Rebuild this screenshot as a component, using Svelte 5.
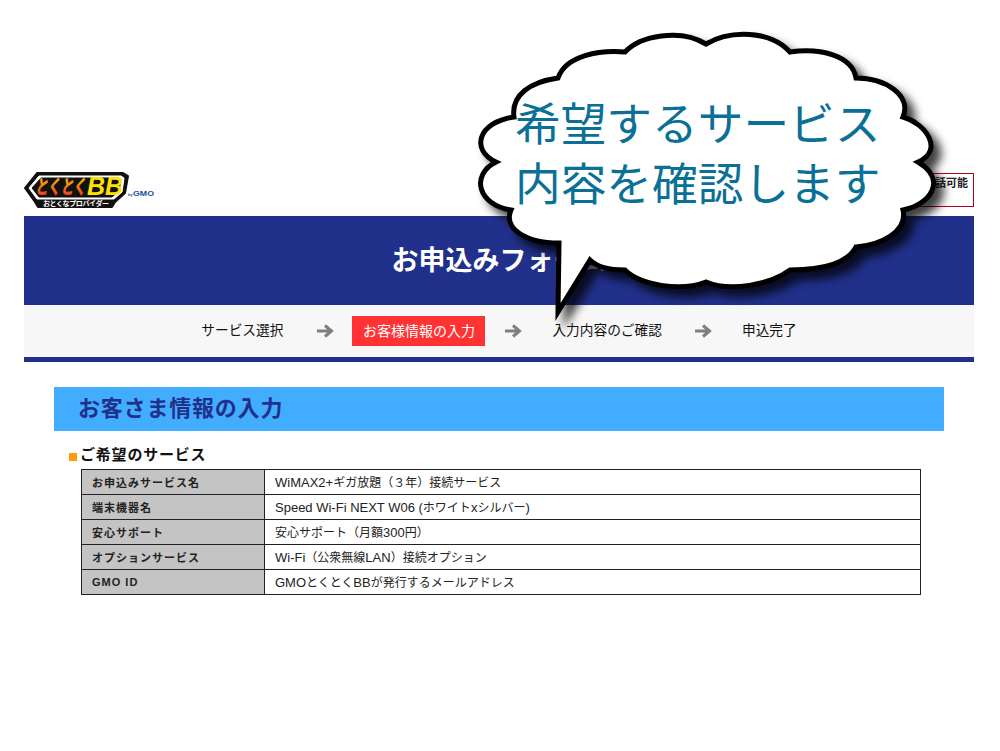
<script>
  const steps = [
    { label: 'サービス選択' },
    { label: 'お客様情報の入力', active: true },
    { label: '入力内容のご確認' },
    { label: '申込完了' }
  ];
  const rows = [
    ['お申込みサービス名', 'WiMAX2+ギガ放題（３年）接続サービス'],
    ['端末機器名', 'Speed Wi-Fi NEXT W06 (ホワイトxシルバー)'],
    ['安心サポート', '安心サポート（月額300円）'],
    ['オプションサービス', 'Wi-Fi（公衆無線LAN）接続オプション'],
    ['GMO ID', 'GMOとくとくBBが発行するメールアドレス']
  ];

  // latin runs are set a little larger than the japanese text
  const splitLatin = (text) => text.split(/([A-Za-z0-9+\-() ]+)/).filter(Boolean);
  const isLatin = (part) => /^[A-Za-z0-9+\-() ]+$/.test(part);
</script>

<div class="page">
  <header class="top">
    <svg class="logo" viewBox="0 0 132 38" width="132" height="38">
      <defs>
        <linearGradient id="kana" x1="0" y1="0" x2="0" y2="1">
          <stop offset="0" stop-color="#ffd800" />
          <stop offset="0.55" stop-color="#f77a10" />
          <stop offset="1" stop-color="#e01a1a" />
        </linearGradient>
      </defs>
      <path class="logo-back" d="M1 18 L13 3 H99 L104 6 L101 23 L91 32 L88 37 H14 L11 32 Z" />
      <path class="logo-band" d="M5 18 L15 6 H97 L100 8 L98 22 L90 29 H13 Z" />
      <path class="logo-inner" d="M8 18 L17 8 H95 L97 10 L95 21 L88 27 H15 Z" />
      <text class="logo-kana" x="11" y="24" textLength="51" lengthAdjust="spacingAndGlyphs" fill="url(#kana)">とくとく</text>
      <text class="logo-bb" x="63" y="25" textLength="36" lengthAdjust="spacingAndGlyphs">BB</text>
      <text class="logo-sub" x="19" y="36" textLength="66">おとくなプロバイダー</text>
      <text class="logo-by" x="104" y="26">by</text>
      <text class="logo-gmo" x="109" y="26" textLength="21" lengthAdjust="spacingAndGlyphs">GMO</text>
    </svg>
    <div class="tel">24時間通話可能</div>
  </header>

  <div class="banner">お申込みフォーム</div>

  <nav class="steps">
    {#each steps as step, i}
      {#if i > 0}
        <svg class="arrow" viewBox="0 0 18 14" width="18" height="14">
          <path d="M1 7 H15 M9 1.5 L15.5 7 L9 12.5" fill="none" stroke="#7f7f7f" stroke-width="3" />
        </svg>
      {/if}
      <span class="step" class:active={step.active}>{step.label}</span>
    {/each}
  </nav>

  <main class="content">
    <h2 class="section">お客さま情報の入力</h2>
    <h3 class="sub"><span class="mark"></span>ご希望のサービス</h3>
    <table>
      <tbody>
        {#each rows as row}
          <tr>
            <th>{row[0]}</th>
            <td>
              {#each splitLatin(row[1]) as part}
                {#if isLatin(part)}<span class="lat">{part}</span>{:else}{part}{/if}
              {/each}
            </td>
          </tr>
        {/each}
      </tbody>
    </table>
  </main>

  <!-- speech bubble lies over the page -->
  <div class="bubble">
    <svg viewBox="0 0 1000 751" width="1000" height="751">
      <path class="cloud" d="M625 52 C640 36 680 28 706 44 C730 30 770 30 790 52 C820 48 852 55 856 78 C885 78 912 95 903 117 C925 123 945 150 918 162 C948 180 930 205 903 210 C908 232 880 245 856 247 C845 268 810 270 790 270 C770 285 730 292 706 282 C680 292 640 285 625 270 C610 270 598 268 590 260 L558 312 L559 243 C525 243 503 228 511 210 C478 205 470 175 496 162 C470 150 478 122 514 117 C511 95 530 82 558 78 C566 55 600 50 625 52 Z" />
    </svg>
    <p class="bubble-text">希望するサービス<br />内容を確認します</p>
  </div>
</div>

<style>
  :global(body) {
    margin: 0;
    background: #fff;
  }
  .page {
    position: relative;
    width: 1000px;
    height: 751px;
    overflow: hidden;
    padding: 170px 26px 0 24px;
    box-sizing: border-box;
    font-family: "Liberation Sans", "Noto Sans CJK JP", sans-serif;
    color: #111;
  }
  .top {
    display: flex;
    justify-content: space-between;
    align-items: flex-start;
    height: 38px;
    margin-bottom: 8px;
  }
  .logo {
    display: block;
  }
  .logo-back {
    fill: #111;
    stroke: #111;
    stroke-width: 2;
    stroke-linejoin: round;
  }
  .logo-band {
    fill: #fff;
    stroke: #fff;
    stroke-linejoin: round;
  }
  .logo-inner {
    fill: #111;
    stroke: #111;
    stroke-linejoin: round;
  }
  .logo-kana {
    font: italic 900 20px "Noto Sans CJK JP", sans-serif;
  }
  .logo-bb {
    font: italic 700 25px "Liberation Sans", sans-serif;
    fill: #ffe100;
  }
  .logo-sub {
    font: 700 7px "Noto Sans CJK JP", sans-serif;
    fill: #fff;
  }
  .logo-by {
    font: 700 4px "Liberation Sans", sans-serif;
    fill: #1a4f9c;
  }
  .logo-gmo {
    font: 700 8px "Liberation Sans", sans-serif;
    fill: #1a4f9c;
  }
  .tel {
    width: 130px;
    height: 32px;
    margin-top: 3px;
    border: 1px solid #b00020;
    text-align: right;
    padding-right: 5px;
    font-size: 11px;
    font-weight: 700;
    line-height: 19px;
    color: #222;
  }
  .banner {
    background: #21308a;
    color: #fff;
    height: 89px;
    line-height: 86px;
    text-align: center;
    font-size: 27px;
    font-weight: 700;
    font-family: "Noto Sans CJK JP", sans-serif;
  }
  .steps {
    display: flex;
    justify-content: center;
    align-items: center;
    gap: 20px;
    height: 52px;
    background: #f7f7f7;
    border-bottom: 5px solid #21308a;
  }
  .step {
    font-size: 13.7px;
    padding: 0 10px;
    line-height: 30px;
  }
  .step:nth-of-type(1) {
    padding-right: 13px;
  }
  .step:nth-of-type(3) {
    padding-right: 12px;
  }
  .step.active {
    background: #ff3333;
    color: #fff;
    font-size: 14px;
    padding: 0 10.5px;
    margin: 0 -1px 0 -2px;
  }
  .content {
    padding: 25px 30px 0;
  }
  .section {
    margin: 0;
    height: 44px;
    line-height: 44px;
    padding-left: 24px;
    background: #42adff;
    color: #21308a;
    font-size: 22px;
    font-weight: 700;
    letter-spacing: 0.8px;
  }
  .sub {
    display: flex;
    align-items: center;
    margin: 13px 0 0 15px;
    height: 18px;
    font-size: 15px;
    font-weight: 700;
    letter-spacing: 0.8px;
  }
  .mark {
    width: 8px;
    height: 8px;
    background: #ff9a0a;
    margin-right: 3px;
    margin-top: 8px;
  }
  table {
    width: 840px;
    margin: 7px 0 0 27px;
    border-collapse: collapse;
    table-layout: fixed;
  }
  th, td {
    border: 1px solid #222;
    height: 25px;
    padding: 0 0 1px 10px;
    text-align: left;
    box-sizing: border-box;
  }
  th {
    width: 183px;
    background: #c4c4c4;
    font-size: 11px;
    letter-spacing: 1px;
    color: #222;
  }
  td {
    font-size: 12px;
    color: #222;
    padding-bottom: 2px;
  }
  .lat {
    font-size: 13px;
    white-space: pre;
  }
  .bubble {
    position: absolute;
    inset: 0;
  }
  .bubble svg {
    display: block;
    filter: drop-shadow(8px 8px 5px rgba(0, 0, 0, 0.75));
  }
  .cloud {
    fill: #fff;
    stroke: #000;
    stroke-width: 5;
    stroke-linejoin: miter;
  }
  .bubble-text {
    position: absolute;
    left: 515px;
    top: 91px;
    margin: 0;
    font-family: "Noto Sans CJK JP", sans-serif;
    font-weight: 400;
    font-size: 45.7px;
    line-height: 60px;
    color: #0a7096;
    white-space: nowrap;
  }
</style>
